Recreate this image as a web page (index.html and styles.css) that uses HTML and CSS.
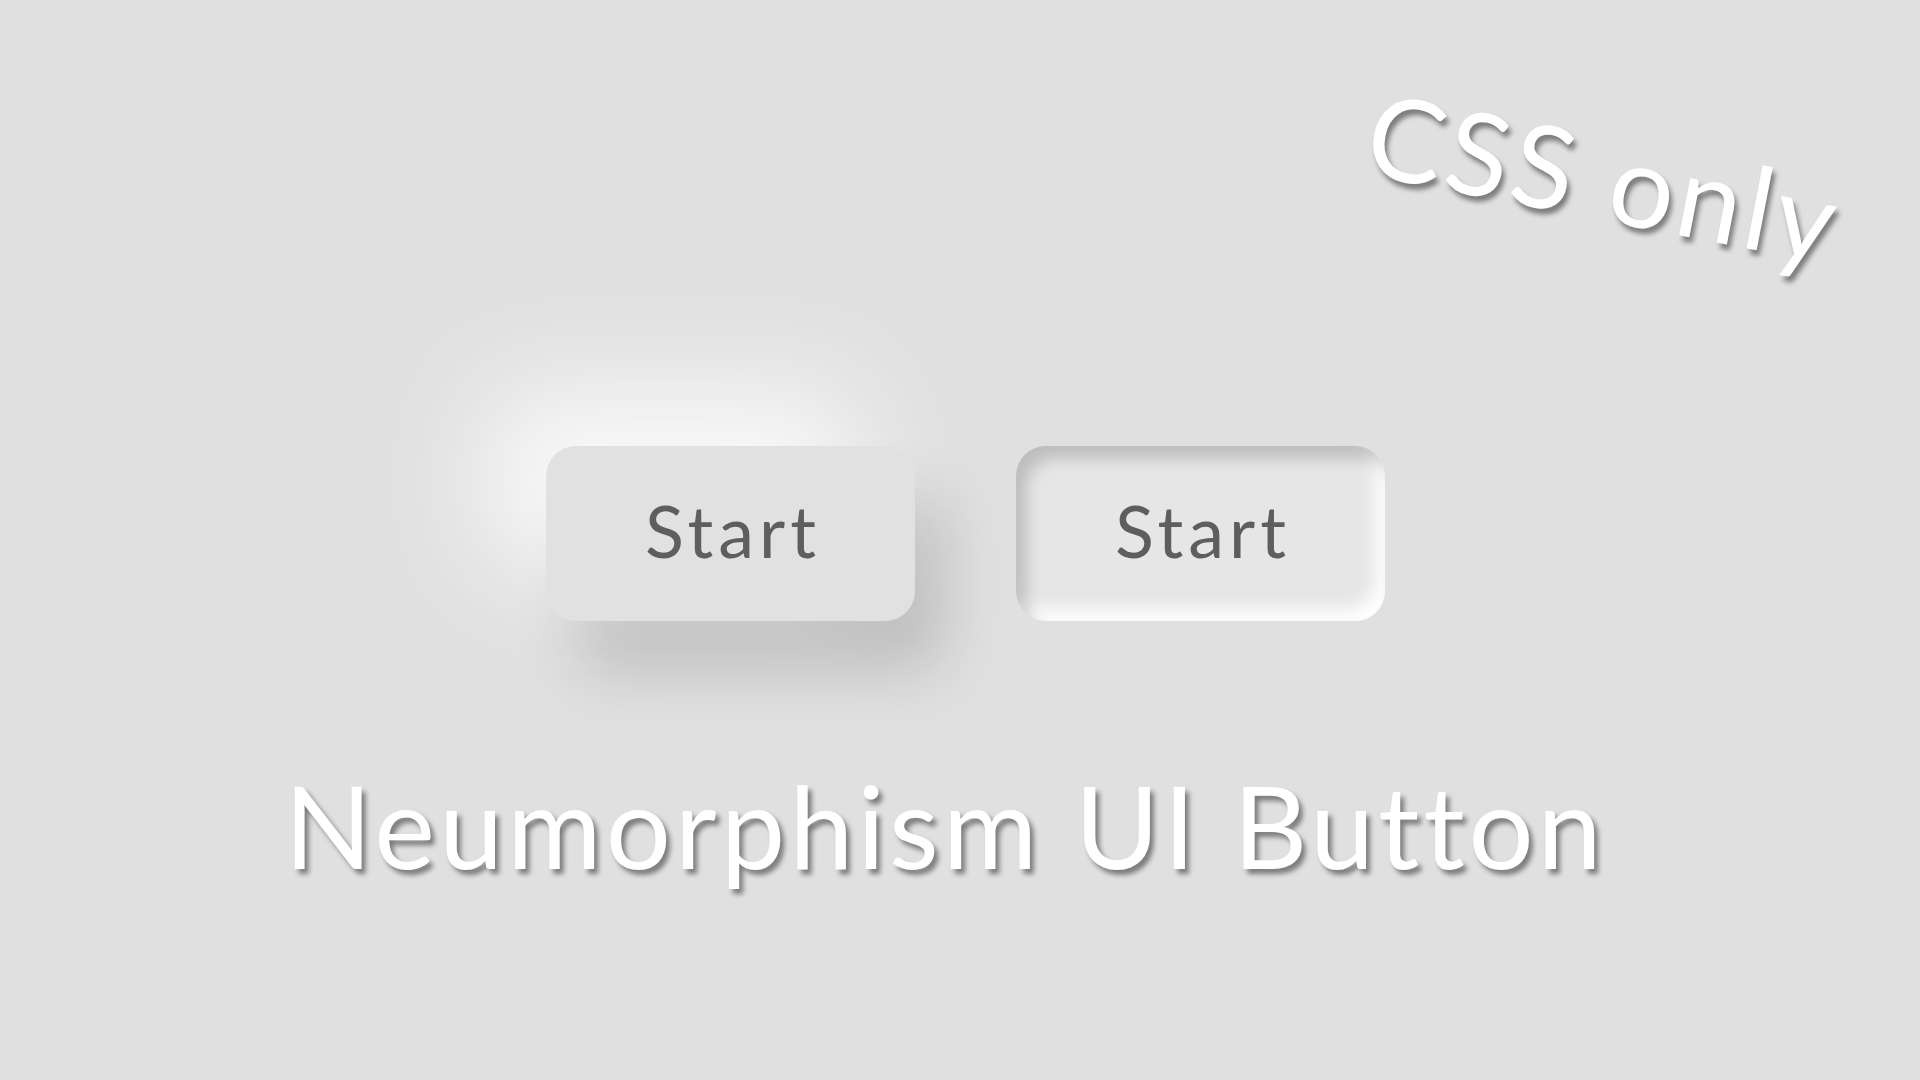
FILE: index.html
```html
<!DOCTYPE html>
<html lang="en">
<head>
<meta charset="utf-8">
<title>Neumorphism UI Button</title>
<link rel="stylesheet" href="styles.css">
</head>
<body>

<main class="stage">
  <div class="btn-row">
    <button class="neu-btn raised">Start</button>
    <button class="neu-btn pressed">Start</button>
  </div>
  <h1 class="title">Neumorphism UI Button</h1>
</main>

<span class="stamp">CSS only</span>

</body>
</html>
```

FILE: styles.css
```css
html, body { margin: 0; height: 100%; }

body {
  background: #e0e0e0;
  font-family: 'Lato', 'Noto Sans', sans-serif;
  overflow: hidden;
  position: relative;
}

.stage {
  display: flex;
  flex-direction: column;
  align-items: center;
  padding-top: 446px;
}

.btn-row {
  display: flex;
  gap: 101px;
  margin-left: 11px;
}

.neu-btn {
  width: 369px;
  height: 175px;
  padding: 0 0 8px 5px;
  border: none;
  border-radius: 30px;
  background: #e1e1e1;
  color: #5e5e5e;
  font-family: inherit;
  font-size: 72px;
  letter-spacing: 5px;
  cursor: pointer;
  outline: none;
}

/* sticks out of the surface */
.neu-btn.raised {
  box-shadow: -60px -55px 110px #fafafa,
              30px 50px 60px rgba(0, 0, 0, 0.15);
}

/* pushed into the surface */
.neu-btn.pressed {
  background: #e6e6e6;
  box-shadow: inset 10px 12px 16px rgba(0, 0, 0, 0.18),
              inset -10px -12px 16px rgba(255, 255, 255, 0.95);
}

.title {
  margin: 146px 30px 0 0;
  font-size: 115px;
  font-weight: 400;
  line-height: 1;
  letter-spacing: 4px;
  color: #fff;
  text-shadow: 4px 5px 5px rgba(0, 0, 0, 0.45);
}

.stamp {
  position: absolute;
  left: 1365px;
  top: 118px;
  font-size: 115px;
  line-height: 1;
  letter-spacing: 4px;
  color: #fff;
  text-shadow: 4px 5px 5px rgba(0, 0, 0, 0.45);
  transform: rotate(11deg);
  white-space: nowrap;
}
```
